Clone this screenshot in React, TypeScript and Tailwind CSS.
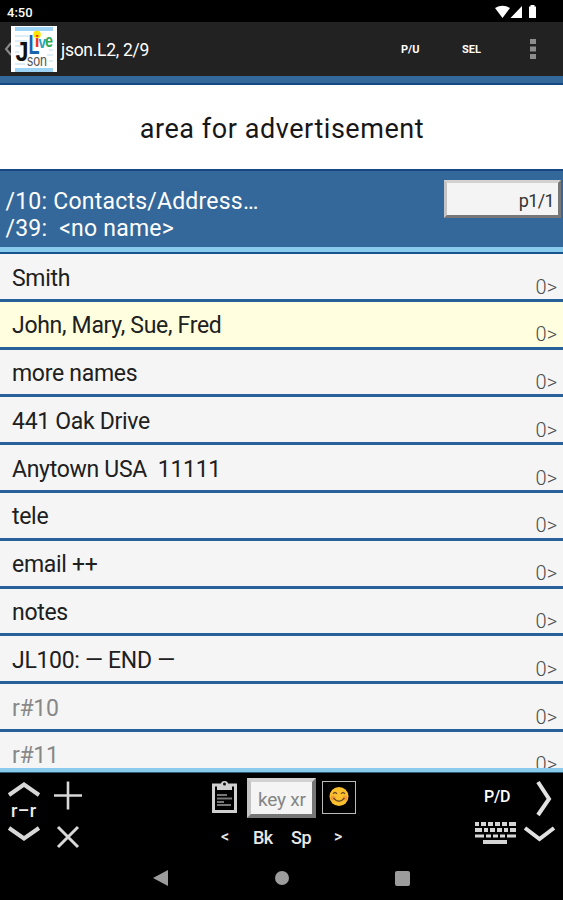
const rows = [
    { text: "Smith" },
    { text: "John, Mary, Sue, Fred", selected: true },
    { text: "more names" },
    { text: "441 Oak Drive" },
    { text: "Anytown USA  11111" },
    { text: "tele" },
    { text: "email ++" },
    { text: "notes" },
    { text: "JL100: — END —" },
    { text: "r#10", empty: true },
    { text: "r#11", empty: true },
];

function StatusBar() {
    return (
        <div className="flex h-[22px] items-center justify-between bg-black pl-[7px] pr-[26px] text-white">
            <span className="mt-[3px] text-[13px] leading-none font-medium">4:50</span>
            <svg className="mt-[2px]" width="42" height="14" viewBox="0 0 42 14" fill="#fff">
                <path d="M0 3Q7.500 -1.500 15 3L7.500 13Z" />
                <path d="M27 1V13H15.500Z" />
                <path d="M35.500 0h4v1.500h1.500V13h-7V1.500H35.500Z" />
            </svg>
        </div>
    );
}

function Logo() {
    return (
        <svg width="46" height="46" viewBox="0 0 46 46" fontFamily="Liberation Sans, sans-serif">
            <rect width="46" height="46" fill="#fff" />
            <path d="M4 1H42V5H4ZM4 42H42V46H4Z" fill="#9dd3f5" />
            <path d="M4 10H18M4 15H16M4 20H10M38 24H42M4 26H8M4 38H14M36 29H42M38 35H42" stroke="#b9dcee" />
            <circle cx="26" cy="8.500" r="3.800" fill="#ffe600" />
            <text x="4.500" y="35" fontSize="28" fontWeight="700" textLength="13" lengthAdjust="spacingAndGlyphs" fill="#111">J</text>
            <text x="17.500" y="27.500" fontSize="27" fontWeight="700" textLength="11" lengthAdjust="spacingAndGlyphs" fill="#1763ae">L</text>
            <text x="23.800" y="21" fontSize="17" fontWeight="700" fill="#ed3124">i</text>
            <text x="27.500" y="21.500" fontSize="16" fontWeight="700" textLength="7.500" lengthAdjust="spacingAndGlyphs" fill="#22a6bc">v</text>
            <text x="34" y="20.500" fontSize="18" fontWeight="700" textLength="8" lengthAdjust="spacingAndGlyphs" fill="#36a852">e</text>
            <text x="16" y="40" fontSize="17" textLength="20" lengthAdjust="spacingAndGlyphs" fill="#555">son</text>
        </svg>
    );
}

function ActionBar() {
    return (
        <header className="flex h-[54px] items-center bg-[#222222] pr-[27px] text-white">
            <svg className="ml-[3px] mr-[-1px]" width="9" height="16" viewBox="0 0 9 16">
                <path d="M8 2L3 8L8 14" fill="none" stroke="#8c8c8c" strokeWidth="2" />
            </svg>
            <Logo />
            <h1 className="mt-[2px] ml-[4px] text-[17.500px] tracking-[-0.280px]">json.L2, 2/9</h1>
            <div className="ml-auto flex items-center text-[11px] font-bold">
                <span className="w-[61px] pt-[2px]">P/U</span>
                <span className="w-[68px] pt-[2px]">SEL</span>
                <svg width="6" height="20" viewBox="0 0 6 20" fill="#8d8d8d">
                    <path d="M0 0h6v5H0ZM0 7.500h6v5H0ZM0 15h6v5H0Z" />
                </svg>
            </div>
        </header>
    );
}

function TextBox({ text, className }: { text: string; className: string }) {
    return (
        <div className={`border-t-[#d2d2d2] border-r-[#777777] border-b-[#777777] border-l-[#c4c4c4] bg-[#f4f4f4] ${className}`}>
            {text}
        </div>
    );
}

function RecordHeader() {
    return (
        <section className="flex h-[78px] justify-between border-t-2 border-[#174884] bg-[#34689a] pr-[2px] pl-[5.500px] text-white">
            <div className="pt-[16.500px] text-[23px] leading-[27px] tracking-[0.220px] whitespace-pre">
                <p>/10: Contacts/Address…</p>
                <p>/39:  &lt;no name&gt;</p>
            </div>
            <TextBox
                text="p1/1"
                className="mt-[9px] h-[38px] w-[117px] border-[3px] pt-[6px] pr-[4px] text-right text-[18px] leading-[24px] tracking-[-0.600px] text-[#333333]"
            />
        </section>
    );
}

function RecordList() {
    return (
        <main className="h-[514px] overflow-hidden">
            {rows.map((row) => (
                <div
                    key={row.text}
                    className={`flex h-[47.800px] justify-between border-b-[3px] border-[#28609a] pr-[6px] pl-[12px] ${row.selected ? "bg-[#ffffdf]" : "bg-[#f5f5f5]"}`}
                >
                    <span className={`pt-[10.500px] text-[23px] leading-[27px] tracking-[-0.300px] whitespace-pre ${row.empty ? "text-[#888888]" : "text-[#202020]"}`}>{row.text}</span>
                    <span className="pt-[19.500px] text-[20px] leading-[27px] font-light text-[#4c4c4c]">0&gt;</span>
                </div>
            ))}
        </main>
    );
}

function LeftControls() {
    return (
        <svg width="80" height="83" viewBox="0 0 80 83" fill="none" stroke="#d8d8d8">
            <path d="M9 22L24 11.500L39 22M9 55L24 65.500L39 55" strokeWidth="4" />
            <path d="M54 22.500H82M68 8.500V36.500" strokeWidth="2.600" />
            <path d="M58 54L78 74M78 54L58 74" strokeWidth="3" />
            <text x="11" y="44" fontSize="18" fontWeight="500" fill="#eee" stroke="none" textLength="25">r–r</text>
        </svg>
    );
}

function ClipboardIcon() {
    return (
        <svg width="25" height="33" viewBox="0 0 25 33" fill="none">
            <path d="M1.500 4H23.500V30.500H1.500Z" stroke="#d0d0d0" strokeWidth="3" />
            <path d="M5 3H9Q9 0 12.500 0Q16 0 16 3H20V9H5Z" fill="#d0d0d0" />
            <circle cx="12.500" cy="3" r="1.500" fill="#111" />
            <path d="M5 14H15M5 17.500H20M5 21H12M5 24H19" stroke="#777" strokeWidth="2" />
        </svg>
    );
}

function SmileIcon() {
    return (
        <svg width="20" height="20" viewBox="0 0 20 20" fill="none">
            <circle cx="10" cy="9.500" r="9.500" fill="#fbc02d" />
            <circle cx="4" cy="11" r="2.500" fill="#f39a35" />
            <circle cx="16" cy="11" r="2.500" fill="#f39a35" />
            <path d="M4 7Q6 4 8 7M12 7Q14 4 16 7M4.500 11Q10 17.500 15.500 11" stroke="#704f27" strokeWidth="1.300" />
        </svg>
    );
}

function CenterControls() {
    return (
        <div className="w-[146px]">
            <div className="flex h-[50px] items-start">
                <div className="mt-[8px] mr-[10px]"><ClipboardIcon /></div>
                <TextBox text="key xr" className="mt-[5px] mr-[6px] h-[40px] w-[69px] border-[4px] pt-[6px] pl-[7px] text-[19px] leading-[24px] tracking-[-0.200px] text-[#858585]" />
                <div className="mt-[8px] flex h-[33px] w-[34px] items-start justify-center border-[1.500px] border-[#bbbbbb] pt-[5px]">
                    <SmileIcon />
                </div>
            </div>
            <div className="flex h-[28px] items-center pl-[9px] text-[18px] font-medium tracking-[-0.500px] text-[#e8e8e8]">
                <span className="w-[32px] text-[16px]">&lt;</span>
                <span className="w-[38px]">Bk</span>
                <span className="w-[43px]">Sp</span>
                <span className="text-[16px]">&gt;</span>
            </div>
        </div>
    );
}

function KeyboardIcon() {
    return (
        <svg className="ml-[2px]" width="41" height="24" viewBox="0 0 41 24" fill="none" stroke="#d5d5d5" strokeWidth="4">
            <path d="M0 3H4M6 3H11M13 3H18M20 3H25M27 3H32M34 3H41" />
            <path d="M0 9H7M9 9H13M15 9H20M22 9H27M29 9H33M35 9H41" />
            <path d="M0 15H9M11 15H16M18 15H23M25 15H30M32 15H41" strokeWidth="3" />
            <path d="M8 21H32" />
        </svg>
    );
}

function RightControls() {
    return (
        <div className="flex w-[90px]">
            <div className="w-[50px]">
                <p className="mt-[13px] ml-[11px] h-[35px] text-[16px] leading-[22px] font-medium tracking-[-0.200px]">P/D</p>
                <KeyboardIcon />
            </div>
            <svg className="ml-[2px]" width="32" height="83" viewBox="0 0 32 83" fill="none" stroke="#e2e2e2" strokeWidth="4">
                <path d="M13 9L24 26L13 42" />
                <path d="M0 55L14.500 66L29 55" />
            </svg>
        </div>
    );
}

function Toolbar() {
    return (
        <section className="flex h-[83px] justify-between bg-black text-white [&_svg]:overflow-visible">
            <div className="w-[212px]"><LeftControls /></div>
            <CenterControls />
            <div className="ml-auto"><RightControls /></div>
        </section>
    );
}

function NavigationBar() {
    return (
        <nav className="flex h-[44px] items-center justify-between bg-black pr-[153px] pl-[153px]">
            <svg width="15" height="16" viewBox="0 0 15 16"><path d="M15 0V16L0 8Z" fill="#9c9c9c" /></svg>
            <span className="h-[14px] w-[14px] rounded-full bg-[#9c9c9c]" />
            <span className="h-[15px] w-[15px] rounded-[2px] bg-[#9c9c9c]" />
        </nav>
    );
}

export default function App() {
    return (
        <div className="h-[900px] w-[563px] overflow-hidden bg-black font-['Roboto','Noto_Sans',sans-serif]">
            <StatusBar />
            <ActionBar />
            <div className="h-[9px] border-b-2 border-[#174884] bg-[#34689a]" />
            <div className="flex h-[84px] items-center justify-center bg-white pt-[4px] pl-[1px] text-[27px] tracking-[0.550px] text-[#171717]">
                area for advertisement
            </div>
            <RecordHeader />
            <div className="h-[7px] border-b-2 border-[#15558c] bg-[#8acaec]" />
            <RecordList />
            <div className="h-[5px] border-b border-[#315b72] bg-[#8acaec]" />
            <Toolbar />
            <NavigationBar />
        </div>
    );
}
